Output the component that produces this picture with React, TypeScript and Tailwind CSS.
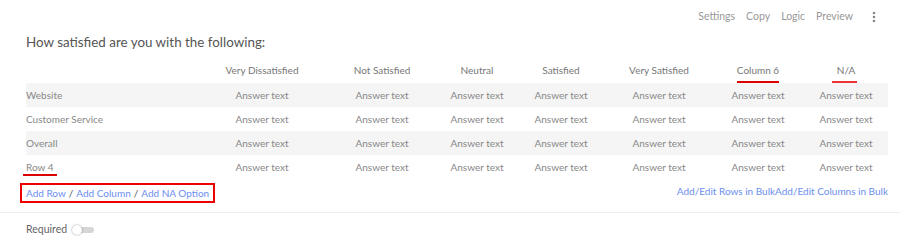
import React from 'react';

const columns = ['Very Dissatisfied', 'Not Satisfied', 'Neutral', 'Satisfied', 'Very Satisfied', 'Column 6', 'N/A'];
const rows = ['Website', 'Customer Service', 'Overall', 'Row 4'];

const grid = 'grid grid-cols-[172px_128px_112px_78px_90px_106px_92px_84px]';

export default function App() {
  return (
    <div className="w-[900px] h-[242px] bg-white overflow-hidden text-[#777]" style={{ fontFamily: 'Lato, "Open Sans", sans-serif' }}>
      {/* toolbar */}
      <div className="flex justify-end items-center h-[32px] pr-[24px] pt-[1px] text-[10.5px] text-[#999] gap-[11px]">
        <span>Settings</span>
        <span>Copy</span>
        <span>Logic</span>
        <span>Preview</span>
        <svg width="4" height="12" viewBox="0 0 4 12" className="ml-[8px]">
          <circle cx="2" cy="2" r="1.3" fill="#888" />
          <circle cx="2" cy="6" r="1.3" fill="#888" />
          <circle cx="2" cy="10" r="1.3" fill="#888" />
        </svg>
      </div>

      <div className="px-[26px]">
        <h2 className="text-[13.4px] text-[#555] leading-[20px]">How satisfied are you with the following:</h2>

        {/* header */}
        <div className={`${grid} mt-[7px] h-[22px] mb-[2px] items-center text-[10px] text-[#777] w-[862px]`}>
          <div />
          {columns.map((c, i) => (
            <div key={c} className="flex justify-center">
              <span className="relative">
                {c}
                {i === 5 && <span className="absolute left-0 right-0 -bottom-[5px] h-[2px] bg-[#d00]" />}
                {i === 6 && <span className="absolute -left-[5px] right-[-2px] -bottom-[5px] h-[2px] bg-[#e33]" />}
              </span>
            </div>
          ))}
        </div>

        {/* body */}
        <div className="w-[862px]">
          {rows.map((r, ri) => (
            <div key={r} className={`${grid} h-[24px] items-center text-[10px] ${ri % 2 === 0 ? 'bg-[#f5f5f5]' : 'bg-white'}`}>
              <div className="text-[#888]">
                <span className="relative">
                  {r}
                  {ri === 3 && <span className="absolute -left-[3px] right-[-3px] -bottom-[3px] h-[2px] bg-[#d00]" />}
                </span>
              </div>
              {columns.map((c) => (
                <div key={c} className="text-center text-[#888]">Answer text</div>
              ))}
            </div>
          ))}
        </div>

        {/* links */}
        <div className="flex justify-between items-start w-[862px] mt-[4px] text-[10px] text-[#6b8ef0]">
          <div className="border-2 border-[#e00] -ml-[6px] px-[4px] h-[20px] flex items-center">
            <span>Add Row</span>
            <span className="text-[#555] mx-[3px]">/</span>
            <span>Add Column</span>
            <span className="text-[#555] mx-[3px]">/</span>
            <span>Add NA Option</span>
          </div>
          <div className="flex pt-[1px]">
            <span>Add/Edit Rows in Bulk</span>
            <span>Add/Edit Columns in Bulk</span>
          </div>
        </div>
      </div>

      <div className="border-t border-[#eee] mt-[9px]" />

      <div className="flex items-center px-[26px] h-[34px] text-[10.5px] text-[#666]">
        <span>Required</span>
        <div className="relative ml-[5px] w-[22px] h-[10px]">
          <div className="absolute left-[4px] right-0 top-[2px] h-[6px] rounded-full bg-[#d6d6d6]" />
          <div className="absolute left-0 top-0 w-[10px] h-[10px] rounded-full bg-white shadow-[0_0_2px_rgba(0,0,0,0.45)]" />
        </div>
      </div>
    </div>
  );
}
